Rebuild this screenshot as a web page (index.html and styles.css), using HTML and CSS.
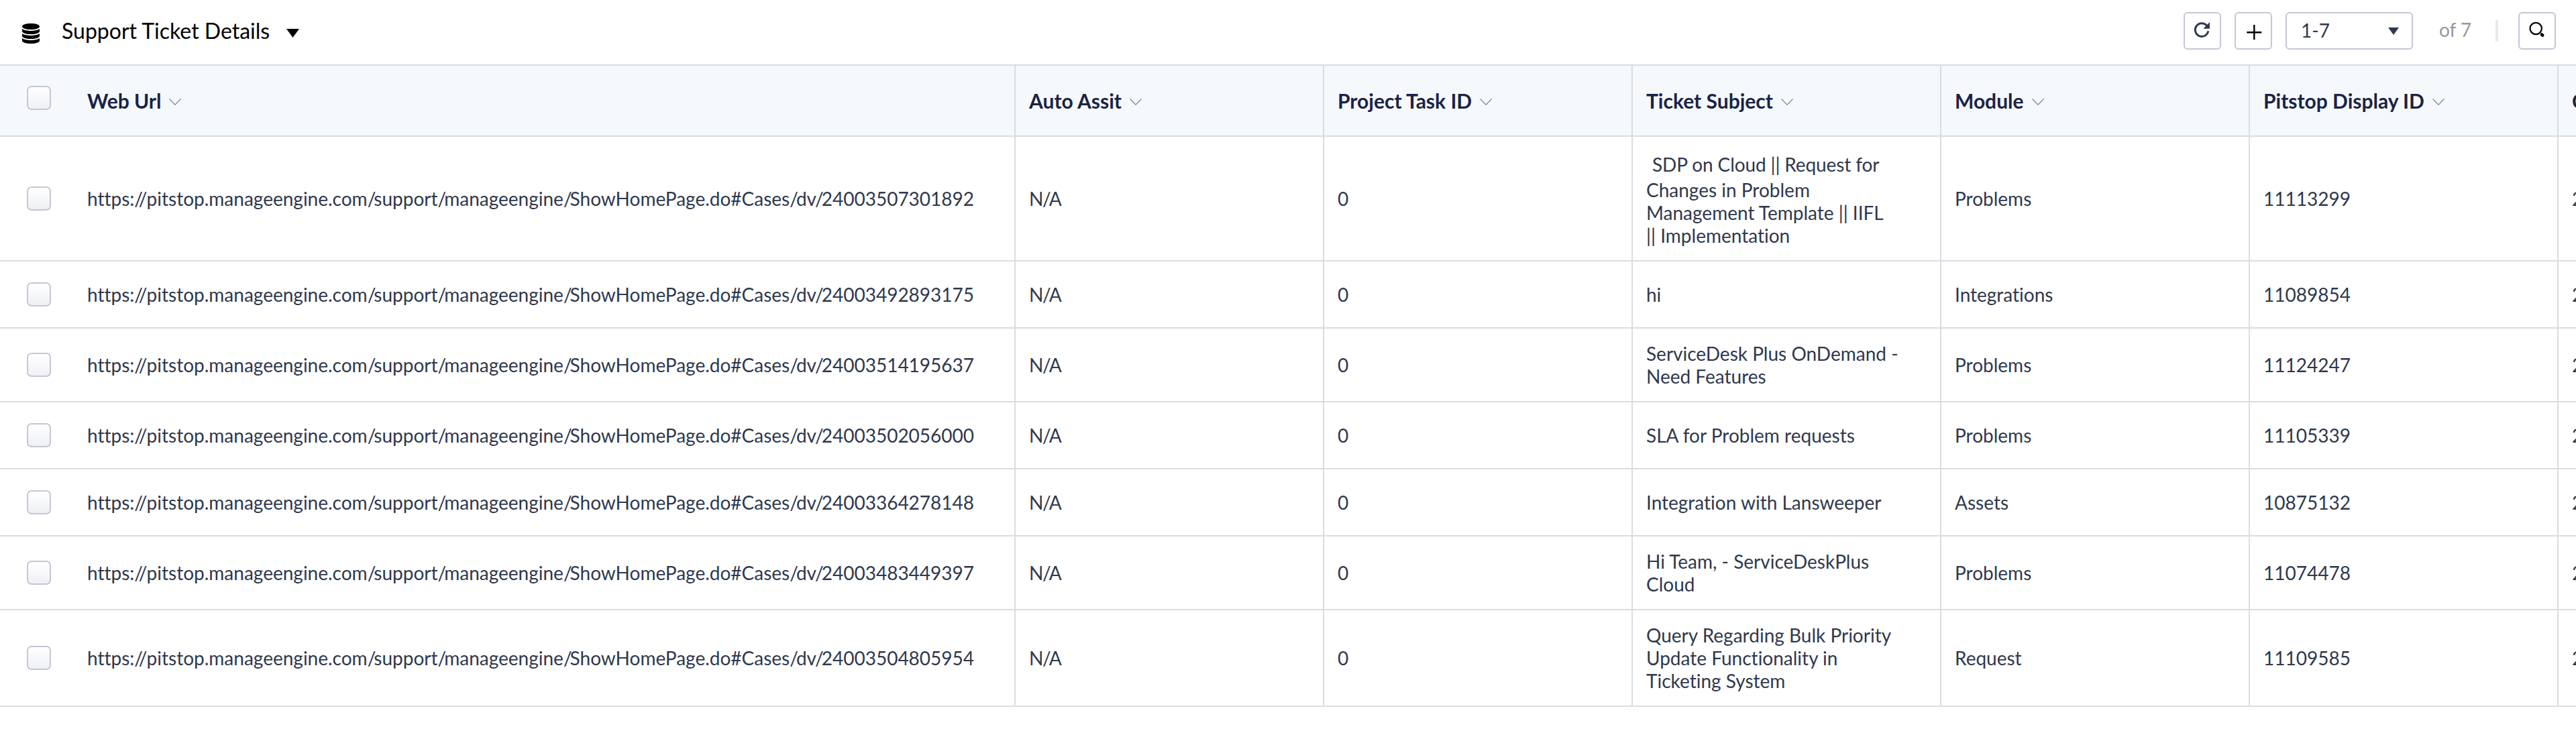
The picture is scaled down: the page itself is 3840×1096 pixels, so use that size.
FILE: index.html
```html
<!DOCTYPE html>
<html lang="en">
<head>
<meta charset="utf-8">
<title>Support Ticket Details</title>
<link rel="stylesheet" href="styles.css">
</head>
<body>
<header class="toolbar">
  <svg class="db-icon" viewBox="0 0 26 30"><path d="M0 4.500C0 2 5 0 13 0s13 2 13 4.500S21 9 13 9 0 7 0 4.500z"/><path d="M0 8c3 2.300 8 3 13 3s10-.7 13-3v3.500C26 14 21 16 13 16S0 14 0 11.500z"/><path d="M0 15c3 2.300 8 3 13 3s10-.7 13-3v3.500C26 21 21 23 13 23S0 21 0 18.500z"/><path d="M0 22c3 2.300 8 3 13 3s10-.7 13-3v3.500C26 28 21 30 13 30S0 28 0 25.500z"/></svg>
  <h1 class="title">Support Ticket Details</h1>
  <svg class="title-caret" viewBox="0 0 19 13"><path d="M0 0h19L9.500 13z"/></svg>
  <div class="actions">
    <button class="btn"><svg class="icon" viewBox="0 0 56 56"><path d="M34.600 20.200A9.800 9.800 0 1 0 36.800 28.300" fill="none" stroke="#2f3a4f" stroke-width="3"/><path d="M39 15v9.700H29.300z" fill="#2f3a4f"/></svg></button>
    <button class="btn"><svg class="icon" viewBox="0 0 56 56"><path d="M29.300 19v22.300M18.300 30.200h22" stroke="#000" stroke-width="2.400"/></svg></button>
    <div class="select"><span>1-7</span><svg class="select-caret" viewBox="0 0 16 11"><path d="M0 0h16L8 11z"/></svg></div>
    <span class="total">of 7</span>
    <span class="divider"></span>
    <button class="btn"><svg class="icon" viewBox="0 0 56 56"><circle cx="26.200" cy="24.500" r="8.700" fill="none" stroke="#000" stroke-width="2.200"/><path d="M35 33.500l1.200 1.200" stroke="#000" stroke-width="4.600" stroke-linecap="round"/></svg></button>
  </div>
</header>
<main class="grid">
  <div class="row head">
    <div class="cell check"><i class="box"></i></div>
    <div class="cell url">Web Url<svg class="chev" viewBox="0 0 18 10"><path d="M.5.500 9 9.200 17.500.5"/></svg></div>
    <div class="cell">Auto Assit<svg class="chev" viewBox="0 0 18 10"><path d="M.5.500 9 9.200 17.500.5"/></svg></div>
    <div class="cell">Project Task ID<svg class="chev" viewBox="0 0 18 10"><path d="M.5.500 9 9.200 17.500.5"/></svg></div>
    <div class="cell">Ticket Subject<svg class="chev" viewBox="0 0 18 10"><path d="M.5.500 9 9.200 17.500.5"/></svg></div>
    <div class="cell">Module<svg class="chev" viewBox="0 0 18 10"><path d="M.5.500 9 9.200 17.500.5"/></svg></div>
    <div class="cell">Pitstop Display ID<svg class="chev" viewBox="0 0 18 10"><path d="M.5.500 9 9.200 17.500.5"/></svg></div>
    <div class="cell">C</div>
  </div>
  <div class="row"><div class="cell check"><i class="box"></i></div><div class="cell url"><p>https://pitstop.manageengine.com<span class="sl">/</span>support<span class="sl">/</span>manageengine<span class="sl">/</span>ShowHomePage.do#Cases<span class="sl">/</span>dv<span class="sl end">/</span>24003507301892</p></div><div class="cell na">N/A</div><div class="cell">0</div><div class="cell"><p><span class="lead">&nbsp;SDP on Cloud || Request for</span>Changes in Problem<br>Management Template || IIFL<br>|| Implementation</p></div><div class="cell">Problems</div><div class="cell">11113299</div><div class="cell">2</div></div>
  <div class="row"><div class="cell check"><i class="box"></i></div><div class="cell url"><p>https://pitstop.manageengine.com<span class="sl">/</span>support<span class="sl">/</span>manageengine<span class="sl">/</span>ShowHomePage.do#Cases<span class="sl">/</span>dv<span class="sl end">/</span>24003492893175</p></div><div class="cell na">N/A</div><div class="cell">0</div><div class="cell">hi</div><div class="cell">Integrations</div><div class="cell">11089854</div><div class="cell">2</div></div>
  <div class="row"><div class="cell check"><i class="box"></i></div><div class="cell url"><p>https://pitstop.manageengine.com<span class="sl">/</span>support<span class="sl">/</span>manageengine<span class="sl">/</span>ShowHomePage.do#Cases<span class="sl">/</span>dv<span class="sl end">/</span>24003514195637</p></div><div class="cell na">N/A</div><div class="cell">0</div><div class="cell"><p>ServiceDesk Plus OnDemand -<br>Need Features</p></div><div class="cell">Problems</div><div class="cell">11124247</div><div class="cell">2</div></div>
  <div class="row"><div class="cell check"><i class="box"></i></div><div class="cell url"><p>https://pitstop.manageengine.com<span class="sl">/</span>support<span class="sl">/</span>manageengine<span class="sl">/</span>ShowHomePage.do#Cases<span class="sl">/</span>dv<span class="sl end">/</span>24003502056000</p></div><div class="cell na">N/A</div><div class="cell">0</div><div class="cell">SLA for Problem requests</div><div class="cell">Problems</div><div class="cell">11105339</div><div class="cell">2</div></div>
  <div class="row"><div class="cell check"><i class="box"></i></div><div class="cell url"><p>https://pitstop.manageengine.com<span class="sl">/</span>support<span class="sl">/</span>manageengine<span class="sl">/</span>ShowHomePage.do#Cases<span class="sl">/</span>dv<span class="sl end">/</span>24003364278148</p></div><div class="cell na">N/A</div><div class="cell">0</div><div class="cell">Integration with Lansweeper</div><div class="cell">Assets</div><div class="cell">10875132</div><div class="cell">2</div></div>
  <div class="row"><div class="cell check"><i class="box"></i></div><div class="cell url"><p>https://pitstop.manageengine.com<span class="sl">/</span>support<span class="sl">/</span>manageengine<span class="sl">/</span>ShowHomePage.do#Cases<span class="sl">/</span>dv<span class="sl end">/</span>24003483449397</p></div><div class="cell na">N/A</div><div class="cell">0</div><div class="cell"><p>Hi Team, - ServiceDeskPlus<br>Cloud</p></div><div class="cell">Problems</div><div class="cell">11074478</div><div class="cell">2</div></div>
  <div class="row"><div class="cell check"><i class="box"></i></div><div class="cell url"><p>https://pitstop.manageengine.com<span class="sl">/</span>support<span class="sl">/</span>manageengine<span class="sl">/</span>ShowHomePage.do#Cases<span class="sl">/</span>dv<span class="sl end">/</span>24003504805954</p></div><div class="cell na">N/A</div><div class="cell">0</div><div class="cell"><p>Query Regarding Bulk Priority<br>Update Functionality in<br>Ticketing System</p></div><div class="cell">Request</div><div class="cell">11109585</div><div class="cell">2</div></div>
</main>
</body>
</html>
```
FILE: styles.css
```css
* { box-sizing: border-box; }
body {
  margin: 0;
  height: 1096px;
  overflow: hidden;
  background: #fff;
  font: 28px/34px Lato, sans-serif;
  font-variant-ligatures: none;
  color: #2f384c;
}
.toolbar {
  display: flex;
  align-items: center;
  height: 96px;
  padding: 0 30px 4px 33px;
  color: #000;
}
.db-icon { width: 26px; height: 30px; margin-top: 7px; }
.title { margin: 0 0 0 33px; font-size: 32px; font-weight: 400; line-height: 40px; }
.title-caret { width: 19px; height: 13px; margin: 6px 0 0 25px; }
.actions { display: flex; align-items: center; margin-left: auto; }
.btn, .select {
  height: 56px;
  border: 2px solid #c8c5d5;
  border-radius: 6px;
  background: #fff;
}
.btn { width: 56px; padding: 0; margin-right: 20px; }
.btn:last-child { margin-right: 0; }
.icon { display: block; width: 56px; height: 56px; margin: -2px; }
.select {
  display: flex;
  align-items: center;
  justify-content: space-between;
  width: 190px;
  padding: 0 19px 2px 21px;
  color: #2f384c;
}
.select-caret { width: 16px; height: 11px; fill: #2f384c; margin-top: 2px; }
.total { width: 87px; padding: 0 0 4px; margin-left: 39px; color: #999; flex: none; }
.divider { width: 4px; height: 32px; margin: 0 30px 0 -3px; background: #e8e8e8; }

.grid { border-top: 2px solid #d9dde1; width: 3840px; overflow: hidden; }
.row {
  display: grid;
  grid-template-columns: 110px 1404px repeat(6, 460px);
  min-height: 100px;
  border-bottom: 2px solid #d9dde1;
}
.cell {
  display: flex;
  align-items: center;
  padding: 20px 0 20px 20px;
  border-right: 2px solid #d9dde1;
  white-space: nowrap;
}
.cell p { margin: 0; }
.na { letter-spacing: -1.3px; }
.sl { letter-spacing: -3px; }
.sl.end { margin-left: -2px; }
.check { padding: 0 0 0 40px; border-right: 0; }
.box {
  width: 36px;
  height: 36px;
  border: 2px solid #c8c5d5;
  border-radius: 7px;
  background: linear-gradient(#fff, #eef0f5);
}
.lead { display: block; line-height: 42px; margin-left: 2px; letter-spacing: -.12px; }
.head {
  height: 106px;
  background: #f5f9fc;
  color: #1a2346;
  font-size: 30px;
  font-weight: 700;
}
.head .cell { padding-top: 20px; }
.head .check { padding: 0 0 8px 40px; }
.chev {
  width: 18px;
  height: 10px;
  margin: 4px 0 0 12px;
  fill: none;
  stroke: #7d8199;
  stroke-width: 1.2;
}
```
